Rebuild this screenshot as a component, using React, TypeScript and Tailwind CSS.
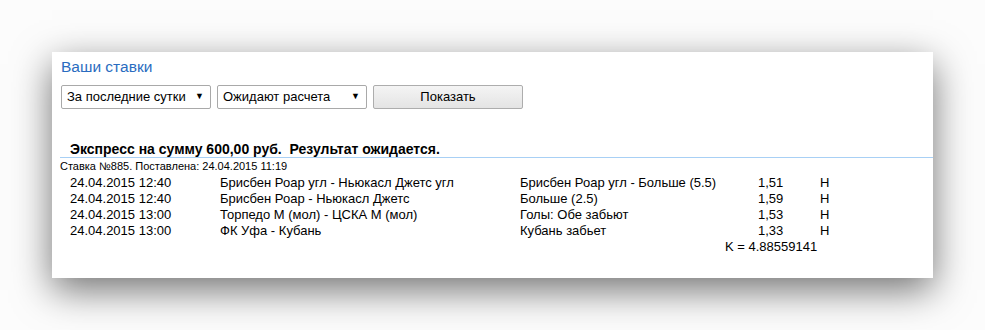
const rows = [
  {
    date: "24.04.2015 12:40",
    match: "Брисбен Роар угл - Ньюкасл Джетс угл",
    outcome: "Брисбен Роар угл - Больше (5.5)",
    odds: "1,51",
    status: "Н",
  },
  {
    date: "24.04.2015 12:40",
    match: "Брисбен Роар - Ньюкасл Джетс",
    outcome: "Больше (2.5)",
    odds: "1,59",
    status: "Н",
  },
  {
    date: "24.04.2015 13:00",
    match: "Торпедо М (мол) - ЦСКА М (мол)",
    outcome: "Голы: Обе забьют",
    odds: "1,53",
    status: "Н",
  },
  {
    date: "24.04.2015 13:00",
    match: "ФК Уфа - Кубань",
    outcome: "Кубань забьет",
    odds: "1,33",
    status: "Н",
  },
];

function Select({ label }: { label: string }) {
  return (
    <div className="flex h-[24px] w-[150px] items-center justify-between rounded-[2px] border border-[#a9a9a9] bg-white pl-[5px] pr-[6px] text-[13px] text-black">
      <span className="whitespace-nowrap">{label}</span>
      <span className="text-[9px]">▼</span>
    </div>
  );
}

export default function App() {
  return (
    <div
      className="h-[330px] w-[985px] bg-[#fcfcfc] pt-[52px] pl-[52px]"
      style={{ fontFamily: "Tahoma, 'Liberation Sans', Arial, sans-serif" }}
    >
      <div className="h-[226px] w-[881px] bg-white shadow-[0_12px_36px_rgba(0,0,0,0.55)]">
        <div className="px-[9px] pt-[5px]">
          <h1 className="text-[15.5px] leading-[20px] text-[#2a6cc0]">
            Ваши ставки
          </h1>
          <div className="mt-[8px] flex gap-[6px]">
            <Select label="За последние сутки" />
            <Select label="Ожидают расчета" />
            <button className="h-[24px] w-[150px] rounded-[2px] border border-[#adadad] bg-gradient-to-b from-[#f4f4f4] to-[#e4e4e4] text-[13px] text-black">
              Показать
            </button>
          </div>
        </div>

        <div className="mt-[32px] pl-[8px]">
          <div className="pl-[10px] text-[14px] font-bold leading-[16px] text-black">
            Экспресс на сумму 600,00 руб.&nbsp; Результат ожидается.
          </div>
          <div className="border-t border-[#a8d0f5] pt-[1px] text-[11px] leading-[14px] text-black">
            Ставка №885. Поставлена: 24.04.2015 11:19
          </div>
          <div className="pt-[2px] pl-[10px] text-[13px] leading-[16px] text-black">
            {rows.map((r, i) => (
              <div key={i} className="flex">
                <div className="w-[150px]">{r.date}</div>
                <div className="w-[300px]">{r.match}</div>
                <div className="w-[238px]">{r.outcome}</div>
                <div className="w-[62px]">{r.odds}</div>
                <div>{r.status}</div>
              </div>
            ))}
            <div className="pl-[655px]">K = 4.88559141</div>
          </div>
        </div>
      </div>
    </div>
  );
}
